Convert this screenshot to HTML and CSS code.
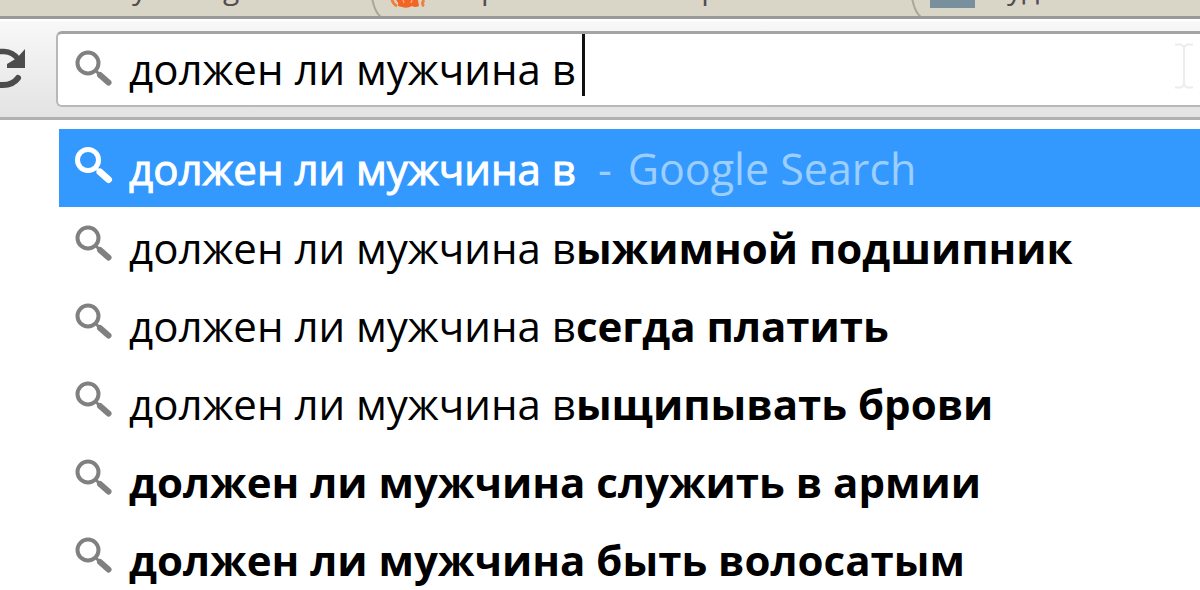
FILE: index.html
```html
<!DOCTYPE html>
<html lang="ru">
<head>
<meta charset="utf-8">
<title>должен ли мужчина в</title>
<link rel="stylesheet" href="styles.css">
</head>
<body>
<svg class="defs" aria-hidden="true">
  <symbol id="lens" viewBox="0 0 40 40">
    <circle cx="14" cy="14" r="10.500" fill="none" stroke="currentColor" stroke-width="var(--ring)"/>
    <path d="M21 21l5 5" stroke="currentColor" stroke-width="3"/>
    <path d="M26 26l8.500 7.500" stroke="currentColor" stroke-width="var(--handle)" stroke-linecap="round"/>
  </symbol>
</svg>
<div class="tabs">
  <div class="tab tab-first"><span>у</span><span>g</span></div>
  <div class="tab tab-second">
    <svg class="edge" viewBox="0 0 20 18"><path d="M2-2C4 8 7 17 14 18" fill="none" stroke="#aaa698" stroke-width="2"/></svg>
    <svg class="flame" viewBox="0 0 36 9"><path d="M2 0Q3 4 7 6M34 0Q31 4 34 6" fill="none" stroke="#ee8040" stroke-width="3"/><path d="M6 0H28L29 6Q25 8 22 6Q17 9 12 7L8 6Q9 3 6 0Z" fill="#f26522"/><path d="M13 0l1 3M22 0l-1 3" stroke="#f8a57b" stroke-width="1.500"/></svg>
    <span>р</span><span>р</span>
  </div>
  <div class="tab tab-third">
    <svg class="edge" viewBox="0 0 20 18"><path d="M2-2C4 8 7 17 14 18" fill="none" stroke="#aaa698" stroke-width="2"/></svg>
    <i class="block"></i><span>уд</span>
  </div>
</div>
<div class="toolbar">
  <button class="reload" aria-label="Обновить">
    <svg viewBox="0 0 28 44"><path d="M-2 4.500H4Q13 5 18 12" fill="none" stroke="#4c4c4c" stroke-width="5.500"/><path d="M25 2V21H7V17L17 11Z" fill="#4c4c4c"/><path d="M-2 38H3Q13 38 18 31" fill="none" stroke="#4c4c4c" stroke-width="6" stroke-linecap="round"/></svg>
  </button>
  <label class="omnibox">
    <svg class="lens"><use href="#lens"/></svg>
    <input class="query" type="text" aria-label="Поиск" value="должен ли мужчина в">
    <span class="caret"></span>
    <svg class="ibeam" viewBox="0 0 20 46"><path d="M1 1.500H7L10 4L13 1.500H19M10 4V42M1 44.500H7L10 42L13 44.500H19" fill="none" stroke="#ececec" stroke-width="2"/></svg>
  </label>
</div>
<ul class="suggestions">
  <li><button class="row selected"><svg class="lens"><use href="#lens"/></svg><span class="text">должен ли мужчина в<span class="engine"><span class="dash">-</span>Google Search</span></span></button></li>
  <li><button class="row"><svg class="lens"><use href="#lens"/></svg><span class="text">должен ли мужчина в<b>ыжимной подшипник</b></span></button></li>
  <li><button class="row"><svg class="lens"><use href="#lens"/></svg><span class="text">должен ли мужчина в<b>сегда платить</b></span></button></li>
  <li><button class="row"><svg class="lens"><use href="#lens"/></svg><span class="text">должен ли мужчина в<b>ыщипывать брови</b></span></button></li>
  <li><button class="row"><svg class="lens"><use href="#lens"/></svg><span class="text"><b>должен ли мужчина служить в армии</b></span></button></li>
  <li><button class="row"><svg class="lens"><use href="#lens"/></svg><span class="text"><b>должен ли мужчина быть волосатым</b></span></button></li>
</ul>
</body>
</html>
```
FILE: styles.css
```css
* { box-sizing: border-box; }
body {
  margin: 0;
  overflow: hidden;
  background: #fff;
  color: #000;
  font-family: "Open Sans", "Noto Sans", sans-serif;
  font-size: 42px;
}
button, input { font: inherit; color: inherit; border: 0; padding: 0; background: none; }
.defs { display: none; }
.tabs {
  display: flex;
  height: 19px;
  overflow: hidden;
  background: #dad6c7;
  border-bottom: 3px solid #989a98;
}
.tab { display: flex; flex: none; color: #554d50; font-size: 30px; line-height: 30px; }
.tab span { margin-top: -27px; }
.tab-first { width: 370px; padding-left: 132px; gap: 76px; }
.tab-second { width: 540px; }
.tab-second span { margin-left: 55px; }
.tab-second span + span { margin-left: 202px; }
.tab-third span { margin-left: 32px; }
.edge { width: 20px; height: 18px; flex: none; }
.flame { width: 36px; height: 9px; }
.block { width: 45px; height: 8px; background: #788f9e; }
.toolbar {
  display: flex;
  padding: 10px 0;
  border-top: 2px solid #fff;
  border-bottom: 3px solid #b1b1af;
  background: linear-gradient(#f8f8f8, #e3e3e3);
}
.reload { width: 56px; flex: none; display: flex; align-items: center; }
.reload svg { width: 28px; height: 44px; }
.omnibox {
  display: flex;
  flex: 1;
  align-items: center;
  height: 76px;
  padding: 0 6px 2px 16px;
  background: #fff;
  border: 2px solid #b8b8b8;
  border-top: 3px solid #a4a4a4;
  border-right: 0;
  border-radius: 6px 0 0 6px;
}
.lens { --ring: 4px; --handle: 6px; width: 40px; height: 40px; flex: none; color: #808080; }
.query { field-sizing: content; height: 64px; margin-left: 15px; outline: 0; }
.caret { width: 3px; height: 62px; align-self: flex-start; background: #111; margin-left: 6px; }
.ibeam { width: 20px; height: 46px; margin-left: auto; margin-bottom: 6px; }
.suggestions { margin: 0; padding: 9px 0 0 59px; list-style: none; }
.row { display: flex; align-items: center; width: 100%; height: 78px; padding-left: 15px; text-align: left; }
.text { margin-left: 15px; padding-top: 4px; line-height: 60px; white-space: nowrap; }
.row .lens { margin-bottom: 4px; }
.selected { background: #3399ff; color: #fff; }
.selected .text { -webkit-text-stroke: 1px #fff; padding-top: 2px; }
.selected .lens { --ring: 5px; --handle: 7px; color: #fff; }
.engine { color: #9cceff; font-size: 43px; -webkit-text-stroke: 0; }
.dash { margin: 0 16px 0 22px; }
b { font-weight: 700; }
```
